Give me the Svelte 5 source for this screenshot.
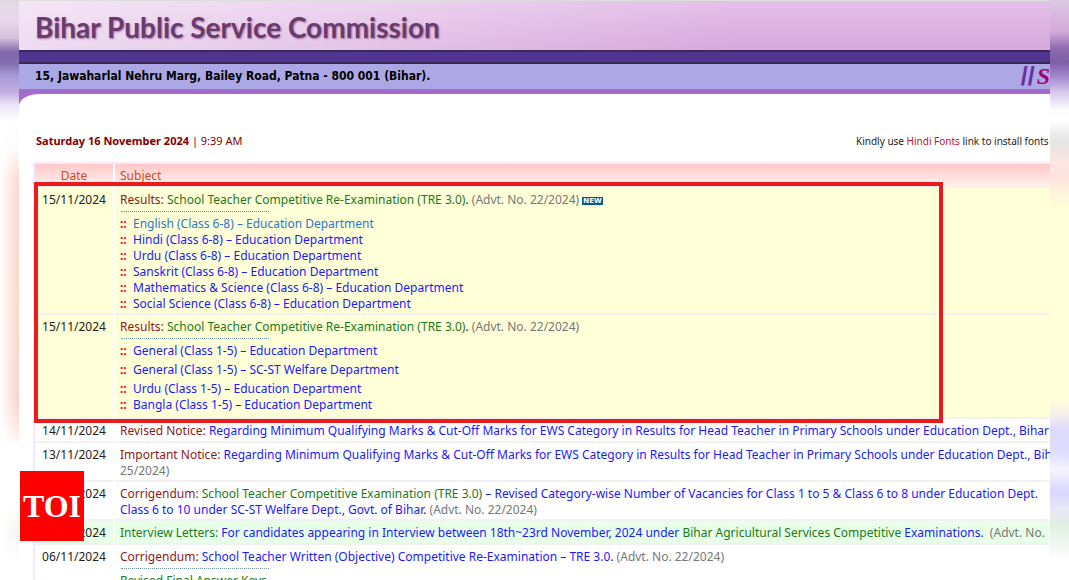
<script>
const classes = (names) => names.map((name) => `${name} – Education Department`);

const notices = [
  {
    date: '15/11/2024',
    tone: 'fresh',
    isNew: true,
    lines: [[
      ['label', 'Results:'],
      ['exam', 'School Teacher Competitive Re-Examination (TRE 3.0)'],
      ['dot', '.'],
      ['advt', '(Advt. No. 22/2024)'],
    ]],
    links: classes([
      'English (Class 6-8)',
      'Hindi (Class 6-8)',
      'Urdu (Class 6-8)',
      'Sanskrit (Class 6-8)',
      'Mathematics & Science (Class 6-8)',
      'Social Science (Class 6-8)',
    ]),
    active: 0,
  },
  {
    date: '15/11/2024',
    tone: 'fresh',
    size: 'roomy',
    lines: [[
      ['label', 'Results:'],
      ['exam', 'School Teacher Competitive Re-Examination (TRE 3.0)'],
      ['dot', '.'],
      ['advt', '(Advt. No. 22/2024)'],
    ]],
    links: [
      'General (Class 1-5) – Education Department',
      'General (Class 1-5) – SC-ST Welfare Department',
      'Urdu (Class 1-5) – Education Department',
      'Bangla (Class 1-5) – Education Department',
    ],
  },
  {
    date: '14/11/2024',
    size: 'single',
    lines: [[
      ['label', 'Revised Notice:'],
      ['link', 'Regarding Minimum Qualifying Marks & Cut-Off Marks for EWS Category in Results for Head Teacher in Primary Schools under Education Dept., Bihar'],
    ]],
  },
  {
    date: '13/11/2024',
    lines: [
      [
        ['label', 'Important Notice:'],
        ['link', 'Regarding Minimum Qualifying Marks & Cut-Off Marks for EWS Category in Results for Head Teacher in Primary Schools under Education Dept., Bihar'],
      ],
      [['advt', '25/2024)']],
    ],
  },
  {
    date: '08/11/2024',
    lines: [
      [
        ['label', 'Corrigendum:'],
        ['exam', 'School Teacher Competitive Examination (TRE 3.0)'],
        ['link', '– Revised Category-wise Number of Vacancies for Class 1 to 5 & Class 6 to 8 under Education Dept.'],
      ],
      [
        ['link', 'Class 6 to 10 under SC-ST Welfare Dept., Govt. of Bihar'],
        ['dot', '.'],
        ['advt', '(Advt. No. 22/2024)'],
      ],
    ],
  },
  {
    date: '07/11/2024',
    tone: 'interview',
    size: 'single',
    lines: [[
      ['exam', 'Interview Letters:'],
      ['link', 'For candidates appearing in Interview between 18th~23rd November, 2024 under'],
      ['exam', 'Bihar Agricultural Services Competitive'],
      ['link', 'Examinations.'],
      ['advt', '\u00a0(Advt. No.'],
    ]],
  },
  {
    date: '06/11/2024',
    lines: [[
      ['label', 'Corrigendum:'],
      ['link', 'School Teacher Written (Objective) Competitive Re-Examination – TRE 3.0'],
      ['dot', '.'],
      ['advt', '(Advt. No. 22/2024)'],
    ]],
    after: 'Revised Final Answer Keys',
  },
];
</script>

<div class="frame">
  <div class="edge left"></div>

  <main>
    <header>
      <h1>Bihar Public Service Commission</h1>
    </header>
    <div class="band"></div>
    <div class="address">
      <strong>15, Jawaharlal Nehru Marg, Bailey Road, Patna - 800 001 (Bihar).</strong>
      <span class="motto"><i>//</i><em>S</em></span>
    </div>

    <div class="body">
      <div class="sheet">
        <div class="info">
          <p class="now"><b>Saturday 16 November 2024</b> | 9:39 AM</p>
          <p class="fonts">Kindly use <a href="#fonts">Hindi Fonts</a> link to install fonts</p>
        </div>

        <div class="board">
          <table>
            <thead>
              <tr><th class="date">Date</th><th>Subject</th></tr>
            </thead>
            <tbody>
              {#each notices as notice}
                <tr class="{notice.tone ?? ''} {notice.size ?? ''}">
                  <td class="date">{notice.date}</td>
                  <td>
                    {#each notice.lines as line}
                      <div class="line">
                        {#each line as [kind, text], i}
                          {#if i > 0 && kind !== 'dot'}{' '}{/if}{#if kind === 'link' || kind === 'exam'}<a class={kind} href="#notice">{text}</a>{:else}<span class={kind}>{text}</span>{/if}
                        {/each}
                        {#if notice.isNew}<span class="new">NEW</span>{/if}
                      </div>
                    {/each}
                    {#if notice.links || notice.after}
                      <div class="dots"></div>
                    {/if}
                    {#if notice.links}
                      <ul>
                        {#each notice.links as link, i}
                          <li><a class="link" class:active={notice.active === i} href="#result">{link}</a></li>
                        {/each}
                      </ul>
                    {/if}
                    {#if notice.after}
                      <div class="line"><a class="exam" href="#keys">{notice.after}</a></div>
                    {/if}
                  </td>
                </tr>
              {/each}
            </tbody>
          </table>
          <div class="marker"></div>
        </div>
      </div>
    </div>

    <div class="toi">TOI</div>
  </main>

  <div class="edge right"></div>
</div>

<style>
:global(body) {
  margin: 0;
  background: #fff;
}

.frame {
  display: grid;
  grid-template-columns: 19px minmax(0, 1fr) 19px;
  height: 100vh;
  overflow: hidden;
  font: 12px/16px 'Noto Sans', sans-serif;
  color: #222;
}

.edge.left {
  background:
    linear-gradient(to right, #fff, #fff0) 0 120px no-repeat,
    linear-gradient(#e0d8e2, #ead8ec 20px, #d5bfdb 38px, #8068aa 52px, #8370b2 64px, #a79bd6 76px, #c2ade2 92px, #eee8f8 106px, #fff 122px, #fdfafa 150px, #fad8d0 180px, #fbd8ca 300px, #f9d2ca 400px, #fce4df 425px, #fff 445px, #fff 500px, #f1f7f1 530px, #fff 565px);
}

.edge.right {
  background: linear-gradient(#dccbe0, #d9b5e0 18px, #d3a8da 32px, #8f6bb0 48px, #7e5ea8 62px, #a78bd0 78px, #d5c8ec 92px, #fdfdff 110px, #fff 120px, #e5e5e5 140px, #fbe5e3 160px, #fee3df 178px, #fff5dc 194px, #ffffd8 210px, #ffffd8 400px, #f6f2e8 412px, #dedafd 430px, #e0dcfe 452px, #f6f4ff 470px, #d9d5fd 492px, #e8e6f8 508px, #e0efe1 525px, #fff 560px);
}

main {
  position: relative;
  min-width: 0;
  overflow: hidden;
  background: #fff;
}

header {
  box-sizing: border-box;
  height: 50px;
  padding: 8px 16px;
  border-top: 1px solid #ddd;
  background:
    linear-gradient(to right, #fff9, #fff0 70%),
    linear-gradient(#e4c0e9, #d6a8db);
}

h1 {
  margin: 0;
  font: bold 28px/36px Lato, sans-serif;
  color: #6c3a6c;
  text-shadow: 1px 1px 2px #a678a8;
  white-space: nowrap;
}

.band {
  height: 10px;
  border: solid #3a2a58;
  border-width: 2px 0;
  background: #51348f;
}

.address {
  display: flex;
  justify-content: space-between;
  height: 25px;
  padding-left: 16px;
  background: #aca8e5;
  color: #000;
  line-height: 25px;
  white-space: nowrap;
}

.address strong {
  font-family: 'DejaVu Sans Condensed', 'DejaVu Sans', sans-serif;
}

.motto {
  display: flex;
  flex: 0 0 28px;
  gap: 2px;
}

.motto i {
  font: bold 25px/25px 'Liberation Sans', sans-serif;
  color: #6b2fa0;
}

.motto em {
  font: italic bold 24px/25px 'Liberation Serif', serif;
  color: #a50070;
}

.body {
  padding-top: 5px;
  background: linear-gradient(#a26bcc 40px, #fff 0);
}

.sheet {
  padding: 39px 0 0 14px;
  border-top-left-radius: 20px 12px;
  background: #fff;
}

.info {
  display: flex;
  justify-content: space-between;
  margin-bottom: 13px;
  padding-left: 3px;
  white-space: nowrap;
}

.info p {
  margin: 0;
  font-size: 11px;
}

.info .now {
  color: #800000;
}

.info .fonts {
  flex: 0 0 194px;
  font-size: 10px;
}

.fonts a {
  color: #c01818;
}

a {
  text-decoration: none;
}

.board {
  position: relative;
  border: solid #f8e8fc;
  border-width: 2px 0 0 2px;
}

table {
  width: 100%;
  table-layout: fixed;
  border-spacing: 0;
}

th,
td {
  padding: 4px 0 1px 5px;
  border-bottom: 2px solid #f2f2f2;
  text-align: left;
  vertical-align: top;
  white-space: nowrap;
}

th {
  padding-bottom: 2px;
  border-bottom-color: #fff0f0;
  background: linear-gradient(#ffc8c8, #fff0ee);
  color: #d04a20;
  font-weight: normal;
}

.date {
  width: 78px;
  padding-left: 0;
  border-right: 2px solid #fff;
  text-align: center;
}

.single td {
  padding-bottom: 2px;
}

.roomy td {
  padding-bottom: 4px;
}

.roomy li:nth-child(-n + 2) {
  margin-bottom: 3px;
}

.fresh td {
  background: #ffffd8;
}

.interview td {
  background: #e8ffe8;
}

.label {
  color: #8b1a1a;
}

.link {
  color: #1a1aff;
}

.exam {
  color: #1a7a1a;
}

.active {
  color: #2a78d0;
}

.advt {
  color: #777;
}

.new {
  display: inline-block;
  padding: 0 1px;
  background: #0b5a8c;
  color: #fff;
  font: bold 7px/8px 'DejaVu Sans', sans-serif;
  vertical-align: 1px;
}

.dots {
  width: 148px;
  height: 3px;
  margin: 0 0 4px 1px;
  border-bottom: 1px dotted #6f8fa0;
}

ul {
  margin: 0;
  padding: 0;
  list-style: none;
}

li::before {
  content: '::';
  display: inline-block;
  width: 13px;
  color: #f00;
  font-weight: bold;
}

/* red box drawn over the two result rows */
.marker {
  position: absolute;
  top: 18px;
  left: -1px;
  right: 107px;
  height: 233px;
  border: 4px solid #e81c1c;
}

.toi {
  position: absolute;
  left: 1px;
  bottom: 39px;
  width: 64px;
  background: #f00;
  color: #fff;
  font: bold 32px/70px 'Liberation Serif', serif;
  text-align: center;
}
</style>
